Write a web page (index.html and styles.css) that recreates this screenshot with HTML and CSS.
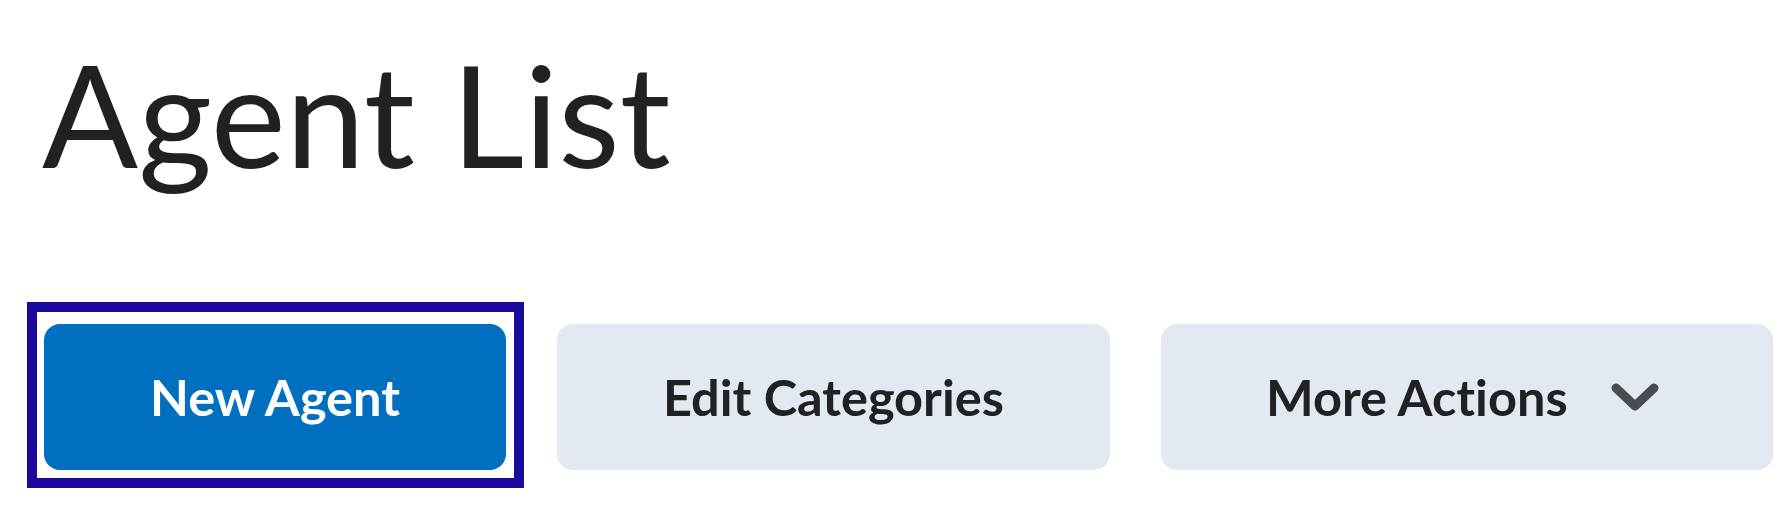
FILE: index.html
```html
<!DOCTYPE html>
<html lang="en">

<head>
    <meta charset="UTF-8">
    <title>Agent List</title>
    <link rel="stylesheet" href="styles.css">
</head>

<body>

    <div class="page">
        <h1 class="page-title">Agent List</h1>

        <div class="toolbar">
            <!-- focused primary button -->
            <div class="focus-ring">
                <button class="btn btn-primary">New Agent</button>
            </div>

            <button class="btn btn-secondary btn-edit">Edit Categories</button>

            <button class="btn btn-secondary btn-more">
                <span>More Actions</span>
                <svg class="chevron" width="48" height="28" viewBox="0 0 48 28">
                    <path d="M5 5 L24 23 L43 5" fill="none" stroke="#494c4e" stroke-width="9"
                        stroke-linecap="round" stroke-linejoin="round" />
                </svg>
            </button>
        </div>
    </div>

</body>

</html>
```

FILE: styles.css
```css
body {
    margin: 0;
    font-family: Lato, "Liberation Sans", Arial, sans-serif;
    font-variant-ligatures: no-common-ligatures;
    color: #202122;
    background: #ffffff;
}

.page {
    padding-left: 27px;
}

.page-title {
    margin: 42px 0 0 15px;
    font-size: 142px;
    font-weight: 400;
    line-height: 1;
}

.toolbar {
    display: flex;
    align-items: flex-start;
    margin-top: 118px;
}

.focus-ring {
    border: 10px solid #1b0a9e;
    padding: 12px 8px 8px 7px;
    margin-right: 33px;
}

.btn {
    display: flex;
    align-items: center;
    justify-content: center;
    height: 146px;
    padding: 0 106px;
    border: none;
    border-radius: 16px;
    font-family: Lato, "Liberation Sans", Arial, sans-serif;
    font-size: 50.5px;
    font-weight: 700;
    font-variant-ligatures: no-common-ligatures;
    line-height: 146px;
    cursor: pointer;
}

.btn-primary {
    background-color: #006fbf;
    color: #ffffff;
}

.btn-secondary {
    margin-top: 22px;
    background-color: #e3e9f1;
    color: #202122;
}

.btn-edit {
    margin-right: 51px;
}

.btn-more {
    padding: 0 114px 0 105px;
}

.chevron {
    margin-left: 43px;
}
```
